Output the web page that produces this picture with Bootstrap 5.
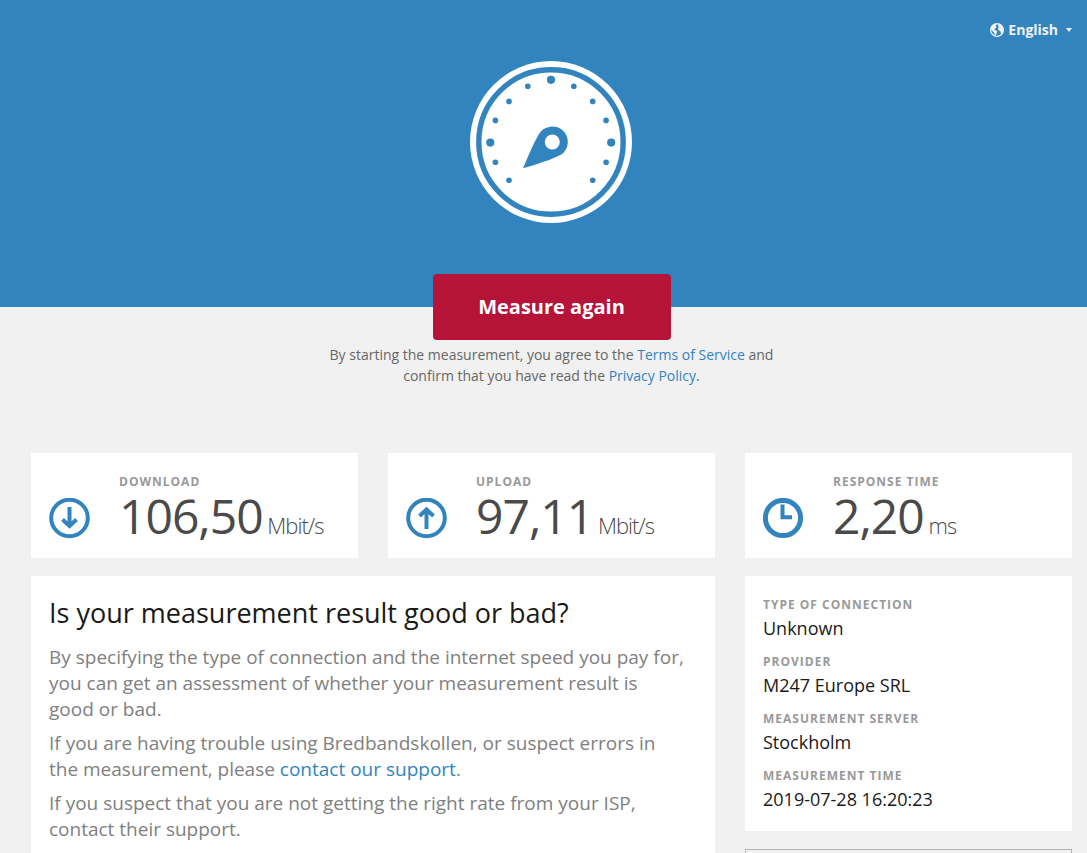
<!DOCTYPE html>
<html lang="en">
<head>
<meta charset="utf-8">
<meta name="viewport" content="width=device-width, initial-scale=1">
<title>Bredbandskollen</title>
<link href="https://cdn.jsdelivr.net/npm/bootstrap@5.3.0/dist/css/bootstrap.min.css" rel="stylesheet">
<style>
  body { font-family: "Open Sans", sans-serif; background: #f1f1f1; color: #1a1a1a; }
  a { color: #3284bf; text-decoration: none; }
  .hero-pad { padding-left: 31px; padding-right: 16px; }
  .page-pad { padding-left: 31px; padding-right: 15px; }
  .hero { background: #3284bf; height: 307px; }
  .lang-bar { height: 59px; margin-bottom: 2px; padding-right: 15px; }
  .lang-btn { color: #f1f1f1; font-size: 14px; line-height: 20px; font-weight: 700; gap: 4px; }
  .lang-btn .caret { border: 3px solid transparent; border-top: 4px solid #f1f1f1; border-bottom: 0; margin-left: 4px; }
  .start { margin-top: -33px; }
  .btn-measure { background: #b61339; color: #fff; font-size: 20px; font-weight: 700; line-height: 28px; width: 238px; padding: 19px 0; border: 0; border-radius: 4px; }
  .btn-measure:hover { background: #9d0f30; color: #fff; }
  .terms { font-size: 14px; line-height: 21px; color: #666; max-width: 480px; margin: 4px auto 67px; }
  .results { --bs-gutter-x: 30px; }
  .panel { background: #fff; padding: 19px 18px 8px; }
  .stat { height: 105px; padding: 19px 18px 0; gap: 29px; }
  .stat svg { width: 41px; height: 41px; margin-top: 26px; }
  .tag { font-size: 12px; line-height: 19px; font-weight: 700; letter-spacing: 1px; text-transform: uppercase; color: #999; }
  .num { font-size: 48px; line-height: 50px; letter-spacing: -1px; color: #4a4a4a; white-space: nowrap; }
  .unit { font-size: 22px; font-weight: 300; letter-spacing: -1px; }
  .second { margin-top: 18px; }
  h1 { font-size: 27px; line-height: 36px; font-weight: 400; margin-bottom: 13px; }
  .info p { font-size: 19px; line-height: 26px; color: #808080; margin-bottom: 8px; padding-right: 11px; }
  .facts dd { font-size: 18px; line-height: 28px; margin-bottom: 10px; }
  .extra { border: 1px solid #b3b3b3; border-bottom: 0; min-height: 4px; margin-top: 18px; }
</style>
</head>
<body class="d-flex flex-column min-vh-100">
<header class="hero">
  <div class="lang-bar d-flex justify-content-end align-items-center">
    <button type="button" class="lang-btn btn p-0 border-0 d-flex align-items-center">
      <svg width="14" height="14" viewBox="0 0 14 14" aria-hidden="true">
        <circle cx="7" cy="7" r="6.4" fill="none" stroke="#f1f1f1" stroke-width="1.2"/>
        <path fill="#f1f1f1" d="M.6 5 2.4 2.200 5.400.8 7 1.600 5.600 2.800 6.600 4 5.400 5.400 4.200 6 4.800 7 6.600 7.800 7.400 9 6.400 10.600 6 12 5 12.600 4.400 10.400 3 8.600 1.200 7zM8 .8 11.600 2 13.400 5.200 13.200 8.400 11.800 10.800 10.800 10.600 10.600 8.400 8.800 7.600 7.800 5.800 8.800 4.200 8.200 2.800z"/>
      </svg>
      <span>English</span><span class="caret"></span>
    </button>
  </div>
  <div class="hero-pad text-center">
    <svg class="d-block mx-auto" width="162" height="162" viewBox="0 0 162 162" role="img" aria-label="Speed gauge">
      <circle cx="81" cy="81" r="81" fill="#fff"/>
      <circle cx="81" cy="81" r="72.2" fill="none" stroke="#3284bf" stroke-width="5.4"/>
      <g fill="#3284bf">
        <circle cx="81" cy="18.8" r="4.1"/><circle cx="20.3" cy="81.6" r="4.1"/><circle cx="141.2" cy="81.6" r="4.1"/>
        <circle cx="57.8" cy="25.3" r="2.8"/><circle cx="103.8" cy="25.3" r="2.8"/>
        <circle cx="39" cy="40.4" r="2.8"/><circle cx="122.7" cy="40.4" r="2.8"/>
        <circle cx="25.4" cy="59.4" r="2.8"/><circle cx="136.1" cy="59.4" r="2.8"/>
        <circle cx="25.4" cy="101.3" r="2.8"/><circle cx="136.1" cy="101.3" r="2.8"/>
        <circle cx="39" cy="119.3" r="2.8"/><circle cx="122.7" cy="119.3" r="2.8"/>
        <path d="M53 107.300C58 96 63 83 69 73A15.500 15.500 0 1 1 91.800 93.200C81 99 67 103 53 107.300Z"/>
      </g>
      <circle cx="82.3" cy="81" r="7.5" fill="#fff"/>
    </svg>
  </div>
</header>
<main class="page-pad flex-grow-1 d-flex flex-column">
  <div class="start text-center">
    <button type="button" class="btn btn-measure">Measure again</button>
    <p class="terms">By starting the measurement, you agree to the <a href="#">Terms of Service</a> and confirm that you have read the <a href="#">Privacy Policy</a>.</p>
  </div>
  <div class="row results">
    <section class="col-4">
      <div class="stat bg-white d-flex">
        <svg viewBox="0 0 41 41" fill="none" stroke="#3284bf" stroke-width="4" aria-hidden="true"><circle cx="20.5" cy="20" r="18.3"/><path d="M20.5 9V29M13.500 21.500 20.500 28 27.500 21.500"/></svg>
        <div><div class="tag">Download</div><div class="num">106,50<span class="unit"> Mbit/s</span></div></div>
      </div>
    </section>
    <section class="col-4">
      <div class="stat bg-white d-flex">
        <svg viewBox="0 0 41 41" fill="none" stroke="#3284bf" stroke-width="4" aria-hidden="true"><circle cx="20.5" cy="20" r="18.3"/><path d="M20.500 31V11M13.500 18 20.500 11.500 27.500 18"/></svg>
        <div><div class="tag">Upload</div><div class="num">97,11<span class="unit"> Mbit/s</span></div></div>
      </div>
    </section>
    <section class="col-4">
      <div class="stat bg-white d-flex">
        <svg viewBox="0 0 41 41" fill="none" stroke="#3284bf" aria-hidden="true"><circle cx="20" cy="20" r="17.6" stroke-width="5"/><path stroke-width="4" d="M19.500 6.500V19.300H29"/></svg>
        <div><div class="tag">Response time</div><div class="num">2,20<span class="unit"> ms</span></div></div>
      </div>
    </section>
  </div>
  <div class="row results second flex-grow-1">
    <section class="col-8 d-flex">
      <div class="panel info w-100">
        <h1>Is your measurement result good or bad?</h1>
        <p>By specifying the type of connection and the internet speed you pay for, you can get an assessment of whether your measurement result is good or bad.</p>
        <p>If you are having trouble using Bredbandskollen, or suspect errors in the measurement, please <a href="#">contact our support</a>.</p>
        <p class="mb-0">If you suspect that you are not getting the right rate from your ISP, contact their support.</p>
      </div>
    </section>
    <aside class="col-4 d-flex flex-column">
      <dl class="panel facts mb-0">
        <dt class="tag">Type of connection</dt><dd>Unknown</dd>
        <dt class="tag">Provider</dt><dd>M247 Europe SRL</dd>
        <dt class="tag">Measurement server</dt><dd>Stockholm</dd>
        <dt class="tag">Measurement time</dt><dd>2019-07-28 16:20:23</dd>
      </dl>
      <div class="extra flex-grow-1"></div>
    </aside>
  </div>
</main>
<script src="https://cdn.jsdelivr.net/npm/bootstrap@5.3.0/dist/js/bootstrap.bundle.min.js"></script>
</body>
</html>
